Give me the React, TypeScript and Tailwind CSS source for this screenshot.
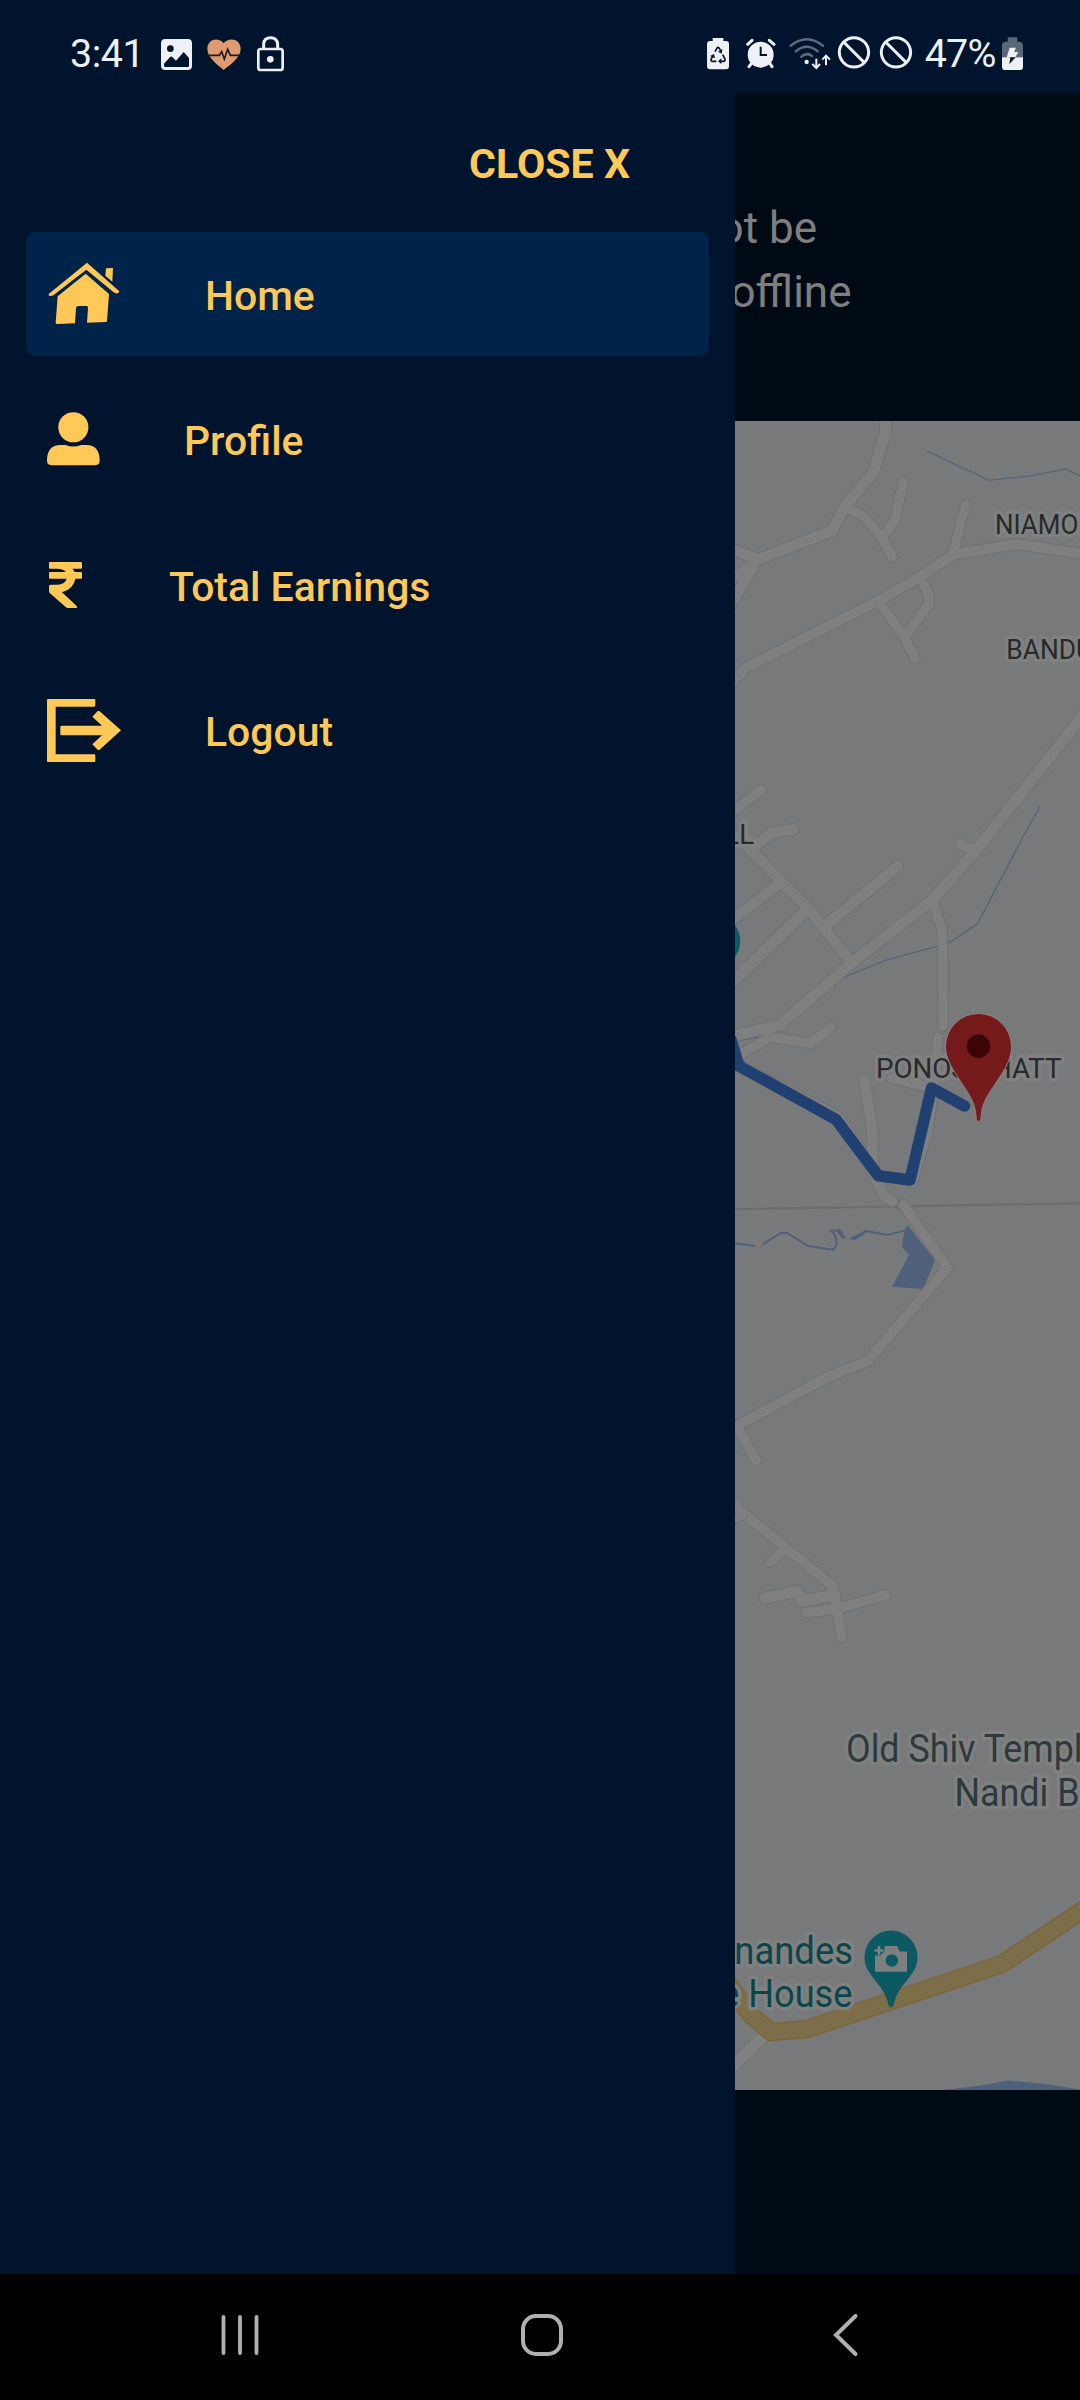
import React from "react";

const GOLD = "#ffc857";

const roads: [string, number][] = [
  ["M886 410 L885 433 L873.7 471.7 L845 506.7 L832 530.7 L758.3 559.3 L728 548", 11.5],
  ["M756 562 L724 584", 10],
  ["M756 561 L725 615", 11],
  ["M845 506 L864 517 L882 538 L892 557", 10],
  ["M903.2 482 L895 520 L882 538", 10],
  ["M724 690 L746.7 667.3 L876.7 601.7 L920 576.7 L953 554.5 L1016.7 544 L1086 554.5", 10.5],
  ["M953 554 L965.7 504.5", 9.5],
  ["M920 576.7 L928.7 595 L928.7 605 L904.3 637", 10],
  ["M879 602 L904.3 637 L915 658.7", 10],
  ["M1096 699 L1031.7 780 L975 851.7 L931.7 900.7 L851.7 962.7 L780 1025 L728 1037", 11.5],
  ["M975 852 L960 843.5", 10],
  ["M933 902 L942.3 930 L943.3 1026", 10],
  ["M938 1037 L935.5 1070 L934 1087 L928 1130 L912 1183", 10],
  ["M761 790 L728 815", 10.5],
  ["M793.5 829 L771.7 833 L750 850", 11],
  ["M728 830 L746 845 L781.7 881.7 L808 908.3 L823 927 L851 962", 11],
  ["M781.7 881.7 L728 923", 11],
  ["M808 909 L728 986", 12],
  ["M825 926 L897.5 866.5", 11.5],
  ["M728 1062 L770 1036.7 L810.7 1043.3 L830.5 1027", 10],
  ["M891.7 1078.3 L928 1087", 10],
  ["M739 1066 L837 1117 L878.3 1175.7", 12],
  ["M864.3 1080 L872.3 1130 L872.7 1173 L885 1196.7 L892.5 1201", 11],
  ["M903.5 1205 L947.3 1267.7 L903 1320 L867.7 1361 L828.3 1376.7 L736.7 1426 L756 1460.5", 10.5],
  ["M728 1427 L737 1427", 10],
  ["M726 1495 L743.3 1513.3 L831.7 1585 L834 1595 L836.7 1608 L841.7 1637", 10.5],
  ["M743 1515 L726 1524", 8],
  ["M784 1550 L770.5 1562.5", 10],
  ["M765 1598 L796.7 1591.5 L802 1601 L835 1595", 11.5],
  ["M806.5 1612.5 L838 1608.5 L885 1595", 10.5],
];

function MapView() {
  return (
    <svg className="block h-[1669px] w-[345px] shrink-0" viewBox="735 421 345 1669" fontFamily="Roboto, sans-serif">
      <rect x="735" y="421" width="345" height="1669" fill="#78797a" />
      <g fill="none" stroke="#4d6079" strokeWidth="1.1">
        <path d="M927.3 451.3 L989 480.3 L1030 476 L1065 469 L1081 476" />
        <path d="M1040 806.7 L1026.7 830 L977.3 924 L949 943 L886.7 960 L845 976.7 L828 990.7" />
        <path d="M760 1036.7 L733 1041.7" />
        <path strokeWidth="1.8" d="M733 1243 L755 1246 M763 1244 L781 1233 L787 1233 L808 1246 L833.3 1250 L837 1244 L835 1235 L831 1231 L839 1230 L844 1238 M850 1238.7 L855 1238.3 L866 1231 L887 1235 L907 1230" />
      </g>
      <path fill="#4f607b" d="M907.3 1225 L935 1260 L923.3 1289 L892 1286.7 L909 1255 L902 1246.7 L904 1233Z M836 1230 L841 1230 L846 1239 L842 1238Z M850 1238 L866 1230 L866 1233 L855 1240Z M944 2090 L985 2085 L1008 2080.5 L1045 2084 L1080 2089.500 V2090Z" />
      <path d="M728 1209.3 L1081 1203.3" stroke="#6b6c6d" strokeWidth="2" fill="none" />
      <path d="M888 1199 L904 1207" stroke="#6c6d6d" strokeWidth="10" />
      <g fill="none" strokeLinecap="round" strokeLinejoin="miter" stroke="#6e6f70">
        {roads.map(([d, w]) => (
          <path key={d} d={d} strokeWidth={w + 1.2} />
        ))}
      </g>
      <g fill="none" strokeLinecap="round" strokeLinejoin="miter" stroke="#7f7f7f">
        {roads.map(([d, w]) => (
          <path key={d} d={d} strokeWidth={w - 0.4} />
        ))}
      </g>
      <path d="M766 2034 L728 2071" stroke="#707171" strokeWidth="12.5" />
      <path d="M766 2034 L728 2071" stroke="#818181" strokeWidth="11.3" />
      <g fill="none" strokeLinejoin="miter">
        <path d="M724 1978 L751 2015 L770.7 2032 L806.7 2029.2 L1001.700 1964 L1086 1908" stroke="#7f5d23" strokeWidth="18" />
        <path d="M724 1978 L751 2015 L770.7 2032 L806.7 2029.2 L1001.700 1964 L1086 1908" stroke="#7c6e48" strokeWidth="16.4" />
      </g>
      <circle cx="714" cy="941" r="26.3" fill="#0a5d66" />

      <g stroke="#7f8080" strokeWidth="7" strokeLinejoin="round" paintOrder="stroke">
        <g fill="#27292a" fontSize="27.600">
          <text x="995" y="534" textLength="127" lengthAdjust="spacingAndGlyphs">NIAMOLIM</text>
          <text x="1006.3" y="659.3" textLength="103" lengthAdjust="spacingAndGlyphs">BANDUR</text>
          <text x="754" y="844" textAnchor="end">LL</text>
          <text x="876" y="1078" textLength="185.500" lengthAdjust="spacingAndGlyphs">PONOSMHATT</text>
        </g>
        <g fill="#2e393e" fontSize="38">
          <text x="846" y="1762.3" textLength="255.500" lengthAdjust="spacingAndGlyphs">Old Shiv Temple</text>
          <text x="954.500" y="1806" textLength="125" lengthAdjust="spacingAndGlyphs">Nandi B</text>
        </g>
        <g fill="#0c4549" fontSize="38" textAnchor="end">
          <text x="853" y="1963.500" textLength="131" lengthAdjust="spacingAndGlyphs">rnandes</text>
          <text x="852.5" y="2006.500" textLength="132.500" lengthAdjust="spacingAndGlyphs">e House</text>
        </g>
      </g>

      <path d="M731 1040 L739 1066 L836 1119.500 L878.3 1175.700 L910 1180 L931.500 1088 L964.500 1106" fill="none" stroke="#1f4070" strokeWidth="11.500" strokeLinecap="round" strokeLinejoin="round" />

      <path d="M978.500 1121.500 C976 1121.500 976.300 1119 976 1116 C975 1101 968 1093 959 1079 C951.500 1067.500 945.500 1058 945.500 1046.500 A33 33 0 0 1 1011.500 1046.500 C1011.500 1058 1006 1067.500 998.500 1079 C989.500 1093 982 1101 981.200 1116 C981 1119 981 1121.500 978.500 1121.500Z" fill="#741a1a" stroke="#8a8484" strokeWidth="1" />
      <circle cx="978.500" cy="1046.300" r="11.700" fill="#3c0505" />

      <path d="M891 2007 C889 2007 888.700 2004 887.500 2000 C885 1991 880 1986 873 1977 C868 1970.500 865 1965 865 1957 A26 26 0 0 1 917 1957 C917 1965 914 1970.500 909 1977 C902 1986 897 1991 894.500 2000 C893.300 2004 893 2007 891 2007Z" fill="#0a5963" stroke="#0a4d57" strokeWidth="0.8" />
      <path d="M884.5 1946 H897 L899.500 1951.500 H907 V1971.700 H875 V1955.500 H881 V1951.500 H884.500Z" fill="#7e8080" />
      <path d="M879 1946 V1955 M874.500 1950.500 H883.500" stroke="#0a5963" strokeWidth="5" />
      <path d="M879 1946 V1955 M874.500 1950.500 H883.500" stroke="#7e8080" strokeWidth="2.600" />
      <circle cx="891.800" cy="1960.500" r="6.200" fill="#0a5963" />
    </svg>
  );
}

function HomeIcon() {
  return (
    <svg className="h-[64px] w-[74px] shrink-0" viewBox="36 36 222 192" fill={GOLD}>
      <path d="M156 38 L253 124 Q253 130 247 130 Q241 131 236 127 L154 59 L56 135 Q50 139 44 138 Q40 137 41 132Z" />
      <path d="M213 55 L234 54 L232 95 L211 77Z" />
      <path d="M152 71 L222 132 L216 213 Q215 216 212 216 L156 218 L159 173 Q159 169 155 168 L130 168 Q124 168 123 174 L120 220 L67 222 Q62 222 62 218 L68 139Z" />
    </svg>
  );
}

function ProfileIcon() {
  return (
    <svg className="h-[54px] w-[53px] shrink-0" viewBox="36 488 160 162" fill={GOLD}>
      <circle cx="115.500" cy="533.500" r="45.500" />
      <path d="M36 634 Q36 588 76 587 L92 587 Q115 597 139 587 L155 587 Q195 588 195 634 Q195 648 182 648 L49 648 Q36 648 36 634Z" />
    </svg>
  );
}

function RupeeIcon() {
  return (
    <svg className="h-[48px] w-[38px] shrink-0" viewBox="141 244 114 144" fill={GOLD}>
      <path d="M150 247 H243 Q246 247 246 250 V264 Q246 267 243 267 H217 Q222 272 224 277 H243 Q246 277 246 280 V294 Q246 297 243 297 H226 Q221 328 186 338 L230 379 Q234 385 227 385 H204 Q200 385 197 382 L149 340 Q147 337 147 334 V320 Q147 315 151 315 H172 Q196 314 200 297 H150 Q147 297 147 294 V280 Q147 277 150 277 H198 Q191 268 172 267 H150 Q147 267 147 264 V250 Q147 247 150 247Z" />
    </svg>
  );
}

function LogoutIcon() {
  return (
    <svg className="h-[63px] w-[74px] shrink-0" viewBox="141 657 222 189" fill={GOLD}>
      <path d="M144 657 H283 Q286 657 286 661 V676 Q286 680 283 680 H167 V823 H283 Q286 823 286 827 V842 Q286 846 283 846 H144 Q141 846 141 843 V660 Q141 657 144 657Z" />
      <path d="M186 737 H306 L277 710 L293 693 Q296 692 299 694 L363 751 L299 809 Q296 811 293 809 L277 793 L306 766 H186 Q181 766 181 762 V741 Q181 737 186 737Z" />
    </svg>
  );
}

const items = [
  { label: "Home", Icon: HomeIcon, active: true },
  { label: "Profile", Icon: ProfileIcon, active: false },
  { label: "Total Earnings", Icon: RupeeIcon, active: false },
  { label: "Logout", Icon: LogoutIcon, active: false },
];

function StatusBar() {
  return (
    <header className="flex h-[93px] shrink-0 items-start justify-between bg-[#00152d] pt-[35px] pr-[56px] pl-[70px] text-[39.5px] leading-[37px] text-[#eceff2]">
      <div className="flex items-start">
        <span className="w-[90px] whitespace-nowrap tracking-[-0.5px]">3:41</span>
        <svg className="h-[36.67px] w-[125px]" viewBox="330 45 375 110" fill="#eef0f3">
          <path fillRule="evenodd" d="M346 57 H413 Q426 57 426 70 V137 Q426 150 413 150 H346 Q333 150 333 137 V70 Q333 57 346 57Z M361 76 A10 10 0 1 0 361 96 A10 10 0 1 0 361 76Z M342 138 V131 L361 110 Q364 108 367 111 L378 122 L401 96 L417 114 V138 Q417 141 413 141 H346 Q342 141 342 138Z" />
          <path fill="#e09a6f" d="M521 150 C505 136 472 114 472 87 C472 56 507 51 521 70 C536 51 572 56 572 87 C572 114 538 136 521 150Z" />
          <path d="M470 106 H508 L515 95 L523 117 L533 88 L541 106 H574" fill="none" stroke="#1d1a26" strokeWidth="5" />
          <rect x="625" y="87" width="73" height="63" rx="7" fill="none" stroke="#eef0f3" strokeWidth="8" />
          <path d="M641 85 V72 Q642 53 662 53 Q681 53 683 72 V85" fill="none" stroke="#eef0f3" strokeWidth="9" />
          <circle cx="661" cy="118" r="10" />
        </svg>
      </div>
      <div className="flex items-start">
        <svg className="h-[36.67px] w-[207.33px]" viewBox="48 45 622 110" fill="#eef0f3">
          <path d="M68 54 H100 V63 H108 Q117 63 117 72 V138 Q117 148 108 148 H60 Q51 148 51 138 V72 Q51 63 60 63 H68Z" />
          <g fill="none" stroke="#00152d" strokeWidth="5">
            <path d="M75 95 L81 84 Q84 80 87 84 L92 92 M98 104 L105 117 Q106 123 101 124 L90 124 M79 124 L66 124 Q61 122 64 116 L69 108" />
          </g>
          <path fill="#00152d" d="M97 87 L95 101 L84 95Z M94 115 V132 L84 124Z M60 108 L72 102 L75 115Z" />
          <circle cx="212" cy="104" r="39" />
          <path d="M173 73 L186 61 M252 73 L238 61 M184 131 L177 140 M240 131 L246 140" stroke="#eef0f3" strokeWidth="9" strokeLinecap="round" />
          <path d="M212 80 V105 H231" fill="none" stroke="#00152d" strokeWidth="6" />
          <g fill="none" stroke="#5b6b7c" strokeWidth="7.500" strokeLinecap="round">
            <path d="M302 77 Q350 38 399 77" />
            <path d="M318 94 Q350 67 383 94" />
            <path d="M334 110 Q350 96 366 108" />
          </g>
          <circle cx="350" cy="126" r="6.500" />
          <path d="M379 116 V143 M367 132 L379 144 L390 132 M408 136 V108 M397 119 L408 107 L420 119" fill="none" stroke="#eef0f3" strokeWidth="6" />
          <g fill="none" stroke="#eef0f3" strokeWidth="9">
            <circle cx="492" cy="97" r="44" />
            <path d="M461 66 L523 128" />
            <circle cx="618" cy="97" r="44" />
            <path d="M587 66 L649 128" />
          </g>
        </svg>
        <span className="ml-[11.5px] w-[76px] whitespace-nowrap tracking-[-0.8px]">47%</span>
        <svg className="mt-[1.67px] h-[34px] w-[23.33px]" viewBox="936 50 70 102">
          <path d="M956 51 H985 V64 H992 Q1002 66 1002 76 V111 H939 V76 Q939 66 949 64 H956Z" fill="#596878" />
          <path d="M939 111 H1002 V139 Q1002 149 992 149 H949 Q939 149 939 139Z" fill="#eef0f3" />
          <path d="M962 82 H981 L975 95 H988 L979 111 H953Z" fill="#eef0f3" />
          <path d="M964 111 H980 L961 132Z" fill="#161616" />
        </svg>
      </div>
    </header>
  );
}

export default function App() {
  return (
    <div className="flex h-[2400px] w-[1080px] flex-col overflow-hidden bg-[#00152d] font-[Roboto,sans-serif]">
      <StatusBar />
      <div className="flex h-[2181px] shrink-0">
        <aside className="flex w-[735px] shrink-0 flex-col bg-[#00152d] px-[26px] text-[40.9px] font-medium text-[#ffc857]">
          <button className="mr-[79px] flex h-[139px] items-center self-end pt-[5px] font-bold">
            <span className="whitespace-nowrap text-[41.1px]">CLOSE X</span>
          </button>
          <nav className="flex flex-col gap-[21.4px]">
            {items.map(({ label, Icon, active }) => (
              <a
                key={label}
                className={
                  active
                    ? "flex h-[124px] items-center gap-[84px] rounded-[10px] bg-[#002349] pl-[21px]"
                    : "flex h-[124px] items-center gap-[84px] rounded-[10px] pl-[21px]"
                }
              >
                <Icon />
                <span className="mt-[4px] whitespace-nowrap leading-[48px]">{label}</span>
              </a>
            ))}
          </nav>
        </aside>
        <main className="flex w-[345px] flex-col overflow-hidden bg-[#000a15]">
          <div className="flex h-[328px] shrink-0 flex-col items-end pt-[103px] text-[44px] leading-[64px] text-[#7f7f7f]">
            <p className="mr-[263px] whitespace-nowrap">not be</p>
            <p className="mr-[228.5px] whitespace-nowrap">offline</p>
          </div>
          <MapView />
        </main>
      </div>
      <footer className="flex h-[126px] shrink-0 items-start justify-between bg-black pt-[39px] pr-[220px] pl-[219px]">
        <svg className="h-[44px] w-[42px]" viewBox="0 0 42 44" stroke="#b0b0b0" strokeWidth="3.800" strokeLinecap="round">
          <path d="M4.500 4 V40 M21 4 V40 M37.500 4 V40" />
        </svg>
        <svg className="mr-[10px] h-[44px] w-[44px]" viewBox="0 0 44 44" fill="none" stroke="#b0b0b0" strokeWidth="4">
          <rect x="3" y="3" width="38" height="38" rx="13" />
        </svg>
        <svg className="h-[44px] w-[28px]" viewBox="0 0 28 44" fill="none" stroke="#b0b0b0" strokeWidth="4" strokeLinecap="round">
          <path d="M23.500 3 L4 22 L23.500 41" />
        </svg>
      </footer>
    </div>
  );
}
